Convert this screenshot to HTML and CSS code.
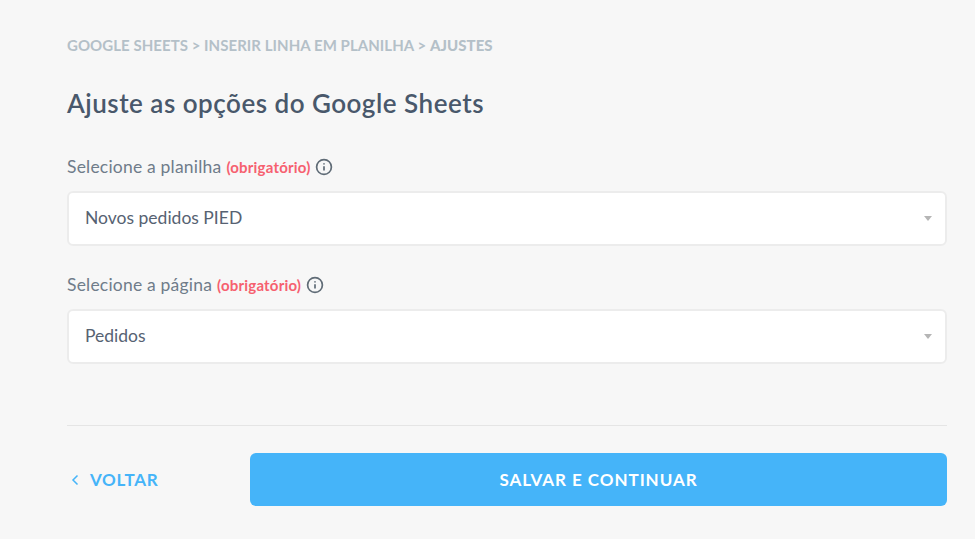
FILE: index.html
```html
<!DOCTYPE html>
<html lang="pt-BR">

<head>
  <meta charset="UTF-8" />
  <meta name="viewport" content="width=device-width, initial-scale=1.0" />
  <title>Ajustes do Google Sheets</title>
  <link rel="stylesheet" href="styles.css">
</head>

<body>
  <div class="container">
    <p class="breadcrumb">GOOGLE SHEETS &gt; INSERIR LINHA EM PLANILHA &gt; <strong>AJUSTES</strong></p>
    <h1>Ajuste as opções do Google Sheets</h1>

    <!-- Spreadsheet -->
    <div class="field">
      <div class="field-label">
        Selecione a planilha <span class="required">(obrigatório)</span>
        <svg class="info" viewBox="0 0 18 18" width="18" height="18">
          <circle cx="9" cy="9" r="7.4" />
          <path d="M9 8.2v4.3" />
          <path d="M9 5.2v1.2" />
        </svg>
      </div>
      <div class="select">Novos pedidos PIED</div>
    </div>

    <!-- Sheet page -->
    <div class="field">
      <div class="field-label">
        Selecione a página <span class="required">(obrigatório)</span>
        <svg class="info" viewBox="0 0 18 18" width="18" height="18">
          <circle cx="9" cy="9" r="7.4" />
          <path d="M9 8.2v4.3" />
          <path d="M9 5.2v1.2" />
        </svg>
      </div>
      <div class="select">Pedidos</div>
    </div>

    <div class="footer">
      <a class="back" href="#">
        <svg viewBox="0 0 8 12" width="8" height="12">
          <path d="M6.5 1.5L2 6l4.5 4.5" />
        </svg>
        VOLTAR
      </a>
      <button>SALVAR E CONTINUAR</button>
    </div>
  </div>
</body>

</html>
```

FILE: styles.css
```css
body {
  font-family: 'Lato', 'Liberation Sans', sans-serif;
  background-color: #f7f7f7;
  color: #4a5568;
  margin: 0;
}

.container {
  width: 880px;
  margin-left: 67px;
  padding-top: 38px;
}

.breadcrumb {
  margin: 0;
  font-size: 15px;
  line-height: 15px;
  font-weight: 700;
  letter-spacing: 0.05px;
  color: #b4c0c8;
}

.breadcrumb strong {
  font-weight: 900;
}

h1 {
  margin: 34px 0 0;
  font-size: 26px;
  line-height: 32px;
  font-weight: 600;
  letter-spacing: 0.5px;
  color: #49586b;
}

.field {
  margin-bottom: 27px;
}

.field:first-of-type {
  margin-top: 36px;
}

.field-label {
  display: flex;
  align-items: center;
  height: 23px;
  font-size: 17.5px;
  letter-spacing: 0.2px;
  color: #6f7c8a;
}

.required {
  margin: 0 5px;
  font-size: 15px;
  font-weight: 700;
  letter-spacing: 0.2px;
  color: #f6606f;
}

.info {
  fill: none;
  stroke: #5f6b76;
  stroke-width: 1.7;
}

.select {
  position: relative;
  box-sizing: border-box;
  height: 55px;
  margin-top: 13px;
  padding-left: 16px;
  line-height: 49px;
  font-size: 17.5px;
  color: #566272;
  background-color: #fff;
  border: 2px solid #ececec;
  border-radius: 6px;
}

/* Dropdown arrow */
.select::after {
  content: "";
  position: absolute;
  right: 13px;
  top: 23px;
  border-left: 4.5px solid transparent;
  border-right: 4.5px solid transparent;
  border-top: 5px solid #b5b5b5;
}

.footer {
  display: flex;
  align-items: center;
  justify-content: space-between;
  margin-top: 61px;
  padding-top: 27px;
  border-top: 1px solid #e5e5e5;
}

.back {
  display: flex;
  align-items: center;
  gap: 11px;
  padding-left: 4px;
  font-size: 17px;
  font-weight: 700;
  letter-spacing: 0.7px;
  color: #45b4f9;
  text-decoration: none;
}

.back svg {
  fill: none;
  stroke: #45b4f9;
  stroke-width: 1.5;
}

button {
  width: 697px;
  height: 53px;
  font-family: inherit;
  font-size: 17px;
  font-weight: 700;
  letter-spacing: 0.95px;
  color: #fff;
  background-color: #45b4f9;
  border: none;
  border-radius: 6px;
}
```
